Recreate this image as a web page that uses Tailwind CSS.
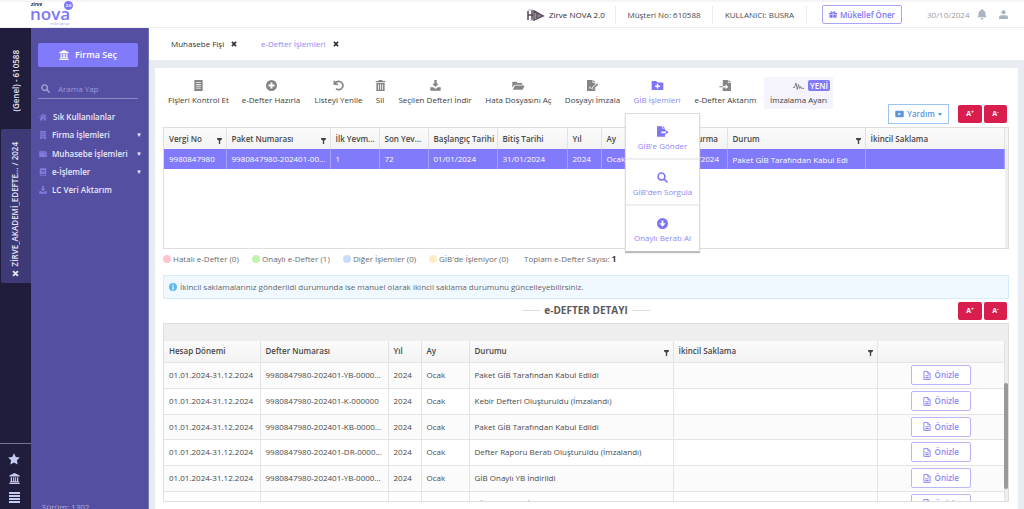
<!DOCTYPE html>
<html lang="tr">
<head>
<meta charset="utf-8">
<title>Zirve NOVA - e-Defter İşlemleri</title>
<script src="https://cdn.jsdelivr.net/npm/@tailwindcss/browser@4"></script>
</head>
<body class="h-screen flex flex-col overflow-hidden bg-white font-['Open_Sans',sans-serif] text-[8px] leading-3 text-[#4a4a4a]">
<svg class="hidden">
  <symbol id="bank" viewBox="0 0 16 16"><path d="M8 0 15.500 3.500V5H.5V3.500zM2.500 6h2v6h1.500V6h1.500v6h1V6H10v6h1.500V6h2v6h1v1.500h-13V12h1zM.5 14.200h15V16H.5z"/></symbol>
  <symbol id="search" viewBox="0 0 16 16"><path fill="none" stroke="currentColor" stroke-width="2.400" stroke-linecap="round" d="M6.500 1.500a5 5 0 1 1 0 10a5 5 0 0 1 0-10M10.300 10.300 14.600 14.600"/></symbol>
  <symbol id="home" viewBox="0 0 16 16"><path d="M8 1.500 0 8.500l1 1.200L8 3.800l7 5.900 1-1.200-2.500-2.200V2.500h-2v2zM8 5.200 2.500 9.800V15h4v-4h3v4h4V9.800z"/></symbol>
  <symbol id="building" viewBox="0 0 16 16"><path fill-rule="evenodd" d="M2.500 0h11v15H15v1H9.500v-3h-3v3H1v-1h1.500zM5 2.500v2h2v-2zm4 0v2h2v-2zM5 6v2h2V6zm4 0v2h2V6zM5 9.500v2h2v-2zm4 0v2h2v-2z"/></symbol>
  <symbol id="wallet" viewBox="0 0 16 16"><path fill-rule="evenodd" d="M2 2h12v1.500H3v.8h12.500V14H.5V3.500Q.5 2 2 2m9.500 6.200v1.800h2V8.200z"/></symbol>
  <symbol id="book" viewBox="0 0 16 16"><path fill-rule="evenodd" d="M3.500.5h11V12H14v2h.5v1.500h-11Q1.500 15.500 1.500 13.500v-11Q1.500.5 3.500.5M5 4v1.300h6.500V4zm0 3v1.300h6.500V7zM3.500 12v2h9v-2z"/></symbol>
  <symbol id="download" viewBox="0 0 16 16"><path d="M6.300 0h3.400v5.500h3L8 10.300 3.300 5.500h3zM.5 10.500h4L8 13l3.500-2.500h4v5H.5z"/></symbol>
  <symbol id="star" viewBox="0 0 16 16"><path d="m8 .3 2.400 4.900 5.400.8-3.900 3.800.9 5.400L8 12.700l-4.800 2.500.9-5.400L.2 6l5.400-.8z"/></symbol>
  <symbol id="bars" viewBox="0 0 11 11"><path d="M0 0h11v2H0zm0 3h11v2H0zm0 3h11v2H0zm0 3h11v2H0z"/></symbol>
  <symbol id="times" viewBox="0 0 16 16"><path fill="none" stroke="currentColor" stroke-width="4.500" d="m2.500 2.500 11 11m0-11-11 11"/></symbol>
  <symbol id="receipt" viewBox="0 0 16 16"><path fill-rule="evenodd" d="M2 0h12v16H2zM4.500 3v1.100h7V3zm0 2.700v1.100h7V5.700zm0 2.700v1.100h7V8.400zm0 2.700v1.100h7v-1.100z"/></symbol>
  <symbol id="plus" viewBox="0 0 16 16"><path fill-rule="evenodd" d="M8 0a8 8 0 1 1 0 16A8 8 0 0 1 8 0M6.700 3.700v3h-3v2.600h3v3h2.600v-3h3V6.700h-3v-3z"/></symbol>
  <symbol id="undo" viewBox="0 0 16 16"><path fill="none" stroke="currentColor" stroke-width="2.400" d="M2 1v5.200h5.500M2.400 6C4 2.800 7 1.600 9.700 2.200a6 6 0 1 1-5.300 10.300"/></symbol>
  <symbol id="trash" viewBox="0 0 16 16"><path fill-rule="evenodd" d="M5.500 0h5l.7 1.300H15v2H1v-2h3.800zM2 4.200h12V16H2zM4.500 6v8h1.200V6zm2.900 0v8h1.200V6zm2.900 0v8h1.200V6z"/></symbol>
  <symbol id="folder" viewBox="0 0 18 16"><path d="M0 11V2.500h6l2 2h6.500V7H4.500Q3 7 2.300 8.200zM4.500 8H18l-3 6H.7l2.500-5Q3.700 8 4.500 8"/></symbol>
  <symbol id="sign" viewBox="0 0 18 16"><path fill-rule="evenodd" d="M1 0h8v4h4v2L8 11v2.500h2.500l2.500-2.400V16H1zM10 0l3 3h-3zM3.500 12.500h1.200l.8-1.500 1 1.800h1V11.600h-.7L5.500 9z"/><path d="m9.200 11.400 6.300-6.300 1.700 1.700-6.300 6.200-2 .4z"/></symbol>
  <symbol id="folderplus" viewBox="0 0 18 16"><path fill-rule="evenodd" d="M1.500 1.500H7l2 2h7.500q1 0 1 1V13.500q0 1.200-1 1.200h-15Q.5 14.700.5 13.500V2.500q0-1 1-1M8 5.500V8H5.500v2H8v2.500h2V10h2.500V8H10V5.500z"/></symbol>
  <symbol id="import" viewBox="0 0 18 16"><path fill-rule="evenodd" d="M5 0h7.500v4H17v12H5v-5h4v2.600L13 10 9 6.200v2.600H5zM13.500 0 17 3h-3.500zM0 9h5v1.600H0z"/></symbol>
  <symbol id="export" viewBox="0 0 18 16"><path fill-rule="evenodd" d="M0 0h8v4h4v4H6.500v2.500H12V16H0zM9 0l3 3H9zM12 5.500l5.500 3.800-5.500 3.700v-2.500h1.500V8H12z"/></symbol>
  <symbol id="arrowdown" viewBox="0 0 16 16"><path fill-rule="evenodd" d="M8 0a8 8 0 1 1 0 16A8 8 0 0 1 8 0M6.700 3.500v4.300H3.500L8 12.700l4.500-4.900H9.300V3.500z"/></symbol>
  <symbol id="pulse" viewBox="0 0 22 16"><path fill="none" stroke="currentColor" stroke-width="1.800" stroke-linejoin="round" d="M0 11h3L6 2l2.500 13L11 5l2 8 2-4 1.500 4 1.500-1 4 1"/></symbol>
  <symbol id="video" viewBox="0 0 18 16"><path fill-rule="evenodd" d="M2.500 1.500h13q2 0 2 2v9q0 2-2 2h-13q-2 0-2-2v-9q0-2 2-2M7 5v6l5-3z"/></symbol>
  <symbol id="filter" viewBox="0 0 12 14"><path d="M0 0h12v2.800L7.600 6.500V14H4.400V6.500L0 2.800z"/></symbol>
  <symbol id="info" viewBox="0 0 16 16"><path fill-rule="evenodd" d="M8 0a8 8 0 1 1 0 16A8 8 0 0 1 8 0M6.800 3v2.200h2.400V3zM6 6.500V8h.8v3.300H6v1.500h4v-1.500h-.8V6.500z"/></symbol>
  <symbol id="file" viewBox="0 0 14 16"><path fill="none" stroke="currentColor" stroke-width="1.700" d="M1.500 1h7L12.500 5v10h-11zM8.500 1v4h4"/><path d="M4 7.500h6v1.300H4zm0 2.700h6v2.800H4z"/></symbol>
  <symbol id="gift" viewBox="0 0 18 16"><path d="M0 4h8.200v4H0zm9.800 0H18v4H9.800zM1 9h7.200v6.500H1zm8.800 0H17v6.500H9.800z"/><path fill="none" stroke="currentColor" stroke-width="1.700" d="M9 4Q3 4 4 1.700 6-.5 9 4q3-4.500 5-2.300Q15 4 9 4"/></symbol>
  <symbol id="bell" viewBox="0 0 16 18"><path d="M7 0h2v1.600q4.500.9 4.500 5.900 0 3.500 2 6H.5q2-2.500 2-6 0-5 4.500-5.900zM5.700 14.700h4.600Q10 17.500 8 17.500t-2.300-2.800"/></symbol>
  <symbol id="user" viewBox="0 0 16 16"><circle cx="8" cy="4" r="3.700"/><path d="M0 16v-3q0-3.500 4-3.500h8q4 0 4 3.500v3z"/></symbol>
</svg>

<header class="h-7 shrink-0 flex items-center border-t-2 border-b border-t-[#f4f5f7] border-b-[#eeeef1] pr-4">
  <a href="#" aria-label="Zirve Nova" class="relative ml-[30px] h-full w-[46px] text-[#7d76f5]">
    <span class="absolute left-px top-0 text-[5px] leading-[5px] font-bold italic text-[#2d2d36]">zirve</span>
    <span class="absolute left-0 top-[5px] text-[17px] leading-[14px] font-semibold">nova</span>
    <span class="absolute left-[34px] top-[-1px] size-[9px] rounded-full bg-[#7d76f5] text-center text-[4px] leading-[9px] font-bold text-white">2.0</span>
    <span class="absolute left-[20px] top-[19px] text-[4px] leading-[5px] text-[#a7a2f6]">mikrogrup</span>
  </a>
  <div class="ml-auto flex h-[18px] items-center">
    <div class="flex h-full w-[89px] items-center gap-1 border-r border-[#ececf0] text-[#2e2e2e]">
      <svg class="h-3 w-[18px]" viewBox="0 0 18 12"><path fill="none" stroke="#54484f" stroke-width="1.500" d="M1 11V2M1 6h5M5 1v10M7 2l9 5-9 4zM10 4v6"/><path fill="#675a70" d="m8 3 9 4-9 4z" opacity=".7"/><path stroke="#b9a8d8" d="M1 1h5M3 11h3"/></svg>
      Zirve NOVA 2.0
    </div>
    <div class="flex h-full w-[97px] items-center justify-center border-r border-[#ececf0]">Müşteri No: 610588</div>
    <div class="flex h-full w-[94px] items-center justify-center border-r border-[#ececf0]">KULLANICI: BUSRA</div>
    <button class="ml-[15px] flex h-[19px] w-20 items-center justify-center gap-[3px] rounded-xs border border-[#aaa5fb] font-semibold text-[#7d76f5]"><svg class="h-[7px] w-2 fill-current"><use href="#gift"/></svg>Mükellef Öner</button>
    <time class="ml-[25px] w-[42px] text-[#9a9aa2]">30/10/2024</time>
    <button aria-label="Bildirimler" class="ml-2 text-[#a9b3c4]"><svg class="h-[11px] w-[10px] fill-current"><use href="#bell"/></svg></button>
    <button aria-label="Hesap" class="ml-3 text-[#a9b3c4]"><svg class="size-[9px] fill-current"><use href="#user"/></svg></button>
  </div>
</header>

<div class="flex min-h-0 flex-1">
  <aside class="flex w-[31px] shrink-0 flex-col bg-[#1f1d3b] text-[#e4e4f4]">
    <button class="flex h-[101px] items-center justify-center pt-1 font-semibold"><span class="rotate-180 [writing-mode:vertical-rl] whitespace-nowrap">(Genel) - 610588</span></button>
    <div class="ml-px flex h-[154px] flex-col items-center justify-end gap-1 rounded-l-xs bg-[#3e3a78] pr-0.5 pb-1.5 font-semibold">
      <button class="rotate-180 [writing-mode:vertical-rl] whitespace-nowrap">ZİRVE_AKADEMİ_EDEFTE... / 2024</button>
      <button aria-label="Kapat"><svg class="size-[7px]"><use href="#times"/></svg></button>
    </div>
    <div class="mt-auto flex h-[66px] flex-col items-center gap-2 border-t border-[#77758f] pt-[9px] pr-[3px] text-[#c5cbf3]">
      <button aria-label="Favoriler"><svg class="size-3 fill-current"><use href="#star"/></svg></button>
      <button aria-label="Firmalar"><svg class="size-[11px] fill-current"><use href="#bank"/></svg></button>
      <button aria-label="Menü"><svg class="size-[11px] fill-current"><use href="#bars"/></svg></button>
    </div>
  </aside>

  <nav class="flex w-[118px] shrink-0 flex-col overflow-hidden border-r border-[#7672b8] bg-[#544fa1] pl-[7px] pr-[10px] pt-[15px] text-[#e9e8fa]">
    <button class="flex h-6 shrink-0 items-center justify-center gap-1.5 rounded-xs bg-[#817afa] text-[9px] font-semibold text-white"><svg class="size-[10px] fill-current"><use href="#bank"/></svg>Firma Seç</button>
    <label class="mt-3 flex h-5 shrink-0 items-center gap-2 border-b border-[#8e8ac6] pl-[3px] text-[#a9a6dc]"><svg class="size-[9px] shrink-0"><use href="#search"/></svg><input aria-label="Arama Yap" placeholder="Arama Yap" class="w-full min-w-0 bg-transparent outline-none placeholder:text-[#9d99de]"></label>
    <ul class="mt-[9px] font-semibold">
      <li><a href="#" class="flex h-[18px] items-center gap-1.5 pl-px"><svg class="size-2 fill-[#827cdd]"><use href="#home"/></svg>Sık Kullanılanlar</a></li>
      <li><a href="#" class="flex h-[18px] items-center gap-[5px] pl-px"><svg class="size-2 fill-[#827cdd]"><use href="#building"/></svg>Firma İşlemleri<span class="ml-auto mr-[-4px] text-[6px]">▼</span></a></li>
      <li><a href="#" class="flex h-[19px] items-center gap-[5px] whitespace-nowrap pl-px"><svg class="size-2 fill-[#827cdd]"><use href="#wallet"/></svg>Muhasebe İşlemleri<span class="ml-auto mr-[-4px] text-[6px]">▼</span></a></li>
      <li><a href="#" class="flex h-[18px] items-center gap-[5px] pl-px"><svg class="size-2 fill-[#827cdd]"><use href="#book"/></svg>e-İşlemler<span class="ml-auto mr-[-4px] text-[6px]">▼</span></a></li>
      <li><a href="#" class="flex h-[18px] items-center gap-[5px] pl-px"><svg class="size-2 fill-[#827cdd]"><use href="#download"/></svg>LC Veri Aktarım</a></li>
    </ul>
    <div class="mt-auto -mb-1 pl-1 text-[#b3b0dd]">Sürüm: 1302</div>
  </nav>

  <main class="flex min-w-0 flex-1 flex-col bg-[#e8ebf2]">
    <div class="flex h-8 shrink-0 items-center bg-white pl-[22px] font-medium text-[#333]">
      <div class="flex w-[90px] items-center gap-[7px]"><a href="#">Muhasebe Fişi</a><button aria-label="Kapat"><svg class="size-[6px]"><use href="#times"/></svg></button></div>
      <div class="flex items-center gap-[7px]"><a href="#" class="text-[#8d87f7]">e-Defter İşlemleri</a><button aria-label="Kapat"><svg class="size-[6px]"><use href="#times"/></svg></button></div>
    </div>
    <section class="mt-2 ml-1.5 mr-[6px] flex min-h-0 flex-1 flex-col bg-white pb-[7px] pl-2 pr-[9px]">
      <div class="flex h-[59px] shrink-0 items-start pt-[9px]">
        <div class="flex text-[#3c3c3c]">
          <button class="flex h-8 w-[71px] flex-col items-center justify-center gap-[3px] whitespace-nowrap"><svg class="size-[11px] fill-[#858585]"><use href="#receipt"/></svg>Fişleri Kontrol Et</button>
          <button class="flex h-8 w-[74px] flex-col items-center justify-center gap-[3px] whitespace-nowrap"><svg class="size-[11px] fill-[#858585]"><use href="#plus"/></svg>e-Defter Hazırla</button>
          <button class="flex h-8 w-[61px] flex-col items-center justify-center gap-[3px] whitespace-nowrap"><svg class="size-[11px] text-[#858585]"><use href="#undo"/></svg>Listeyi Yenile</button>
          <button class="flex h-8 w-[22px] flex-col items-center justify-center gap-[3px] whitespace-nowrap"><svg class="size-[11px] fill-[#858585]"><use href="#trash"/></svg>Sil</button>
          <button class="flex h-8 w-[88px] flex-col items-center justify-center gap-[3px] whitespace-nowrap"><svg class="size-[11px] fill-[#858585]"><use href="#download"/></svg>Seçilen Defteri İndir</button>
          <button class="flex h-8 w-[79px] flex-col items-center justify-center gap-[3px] whitespace-nowrap"><svg class="h-[11px] w-[13px] fill-[#858585]"><use href="#folder"/></svg>Hata Dosyasını Aç</button>
          <button class="flex h-8 w-[69px] flex-col items-center justify-center gap-[3px] whitespace-nowrap"><svg class="h-[11px] w-[13px] fill-[#858585]"><use href="#sign"/></svg>Dosyayı İmzala</button>
          <div class="relative w-[60px]">
            <button aria-expanded="true" class="flex h-8 w-full flex-col items-center justify-center gap-[3px] whitespace-nowrap text-[#8d87f7]"><svg class="h-[11px] w-[13px] fill-[#7d76f5]"><use href="#folderplus"/></svg>GİB İşlemleri</button>
            <div class="absolute left-[-2px] top-9 z-10 w-[75px] divide-y-2 divide-[#eeeeee] border border-[#dcdcdc] border-b-[#bcbcbc] bg-white text-[#8d87f7] shadow-[0_1px_1px_#bbb]">
              <button class="flex h-[46px] w-full flex-col items-center justify-end gap-[3px] pb-1.5"><svg class="h-[11px] w-[12px] fill-[#7d76f5]"><use href="#export"/></svg>GİB'e Gönder</button>
              <button class="flex h-[46px] w-full flex-col items-center justify-end gap-[3px] pb-1.5"><svg class="size-[11px] text-[#7d76f5]"><use href="#search"/></svg>GİB'den Sorgula</button>
              <button class="flex h-[45px] w-full flex-col items-center justify-end gap-[3px] pb-[7px]"><svg class="size-[11px] fill-[#7d76f5]"><use href="#arrowdown"/></svg>Onaylı Beratı Al</button>
            </div>
          </div>
          <button class="flex h-8 w-[77px] flex-col items-center justify-center gap-[3px] whitespace-nowrap"><svg class="h-[11px] w-[13px] fill-[#858585]"><use href="#import"/></svg>e-Defter Aktarım</button>
          <button class="flex h-8 w-[69px] flex-col items-center justify-center gap-[3px] whitespace-nowrap rounded-xs bg-[#f5f3fb]"><span class="flex items-center gap-1 pl-[26px]"><svg class="h-2 w-[11px] text-[#777]"><use href="#pulse"/></svg><span class="h-[11px] rounded-xs bg-[#817afa] px-0.5 leading-[11px] font-semibold text-white">YENİ</span></span>İmzalama Ayarı</button>
        </div>
        <div class="ml-auto mr-0.5 flex gap-0.5 pt-[27px] font-bold">
          <button class="mr-[7px] flex h-5 w-[61px] items-center justify-center gap-[3px] border border-[#9cc3f2] font-semibold text-[#5b96df]"><svg class="h-2 w-[9px] fill-current"><use href="#video"/></svg>Yardım<svg class="h-[3px] w-[4px] fill-current" viewBox="0 0 4 3"><path d="M0 0h4L2 3z"/></svg></button>
          <button class="mt-px h-[18px] w-6 rounded-xs bg-[#d91e4e] text-[7px] leading-[18px] text-white">A<sup class="text-[5px]">+</sup></button>
          <button class="mt-px h-[18px] w-[23px] rounded-xs bg-[#d91e4e] text-[7px] leading-[18px] text-white">A<sup class="text-[5px]">-</sup></button>
        </div>
      </div>

      <div class="h-[122px] shrink-0 overflow-hidden border border-[#dedede] bg-[linear-gradient(#f6f6f6_21px,#eeeeee_21px)]">
        <div class="mr-[3px] h-full bg-white">
        <table class="w-full table-fixed border-collapse text-left whitespace-nowrap">
          <colgroup><col class="w-[62px]"><col class="w-[104px]"><col class="w-[49px]"><col class="w-[49px]"><col class="w-[69px]"><col class="w-[70px]"><col class="w-[34px]"><col class="w-[70px]"><col class="w-[56px]"><col class="w-[138px]"><col></colgroup>
          <thead class="bg-[linear-gradient(#fbfbfb,#f3f3f3)] text-[#484848]">
            <tr class="h-[21px] *:border-r *:border-[#e2e2e2] *:pl-[5px] *:font-semibold">
              <th><div class="flex items-center justify-between pr-1">Vergi No<svg class="mt-1 h-[6px] w-[5px] fill-[#444]"><use href="#filter"/></svg></div></th>
              <th><div class="flex items-center justify-between pr-1">Paket Numarası<svg class="mt-1 h-[6px] w-[5px] fill-[#444]"><use href="#filter"/></svg></div></th>
              <th>İlk Yevm...</th><th>Son Yev...</th><th>Başlangıç Tarihi</th><th>Bitiş Tarihi</th><th>Yıl</th><th>Ay</th><th>Oluşturma</th>
              <th><div class="flex items-center justify-between pr-1">Durum<svg class="mt-1 h-[6px] w-[5px] fill-[#444]"><use href="#filter"/></svg></div></th>
              <th>İkincil Saklama</th>
            </tr>
          </thead>
          <tbody>
            <tr class="h-5 bg-[#817afa] text-white *:border-r *:border-[#a5a0fb] *:pl-[5px]">
              <td>9980847980</td><td>9980847980-202401-00...</td><td>1</td><td>72</td><td>01/01/2024</td><td>31/01/2024</td><td>2024</td><td>Ocak</td><td>05/02/2024</td><td class="pt-0.5">Paket GİB Tarafından Kabul Edi</td><td></td>
            </tr>
          </tbody>
        </table>
        </div>
      </div>

      <div class="flex h-[26px] shrink-0 items-center pb-1.5 text-[#6a6a6a]">
        <span class="flex w-[89px] items-center gap-0.5"><i class="size-2 rounded-full bg-[#ffc4cf]"></i>Hatalı e-Defter (0)</span>
        <span class="flex w-[91px] items-center gap-0.5"><i class="size-2 rounded-full bg-[#c4f3b0]"></i>Onaylı e-Defter (1)</span>
        <span class="flex w-[86px] items-center gap-0.5"><i class="size-2 rounded-full bg-[#cadcf9]"></i>Diğer İşlemler (0)</span>
        <span class="flex w-[95px] items-center gap-0.5"><i class="size-2 rounded-full bg-[#ffecc6]"></i>GİB'de İşleniyor (0)</span>
        <span>Toplam e-Defter Sayısı: <b class="text-[#333]">1</b></span>
      </div>

      <div role="note" class="flex h-6 shrink-0 items-center gap-[3px] border border-[#d3edfb] bg-[#f0f9ff] pl-[5px] text-[#666]"><svg class="size-2 fill-[#5cbcf2]"><use href="#info"/></svg>İkincil saklamalarınız gönderildi durumunda ise manuel olarak ikincil saklama durumunu güncelleyebilirsiniz.</div>

      <div class="relative flex h-6 shrink-0 items-center justify-center gap-1 pb-0.5">
        <i class="h-px w-[18px] bg-[#dedede]"></i><h2 class="text-[10px] font-bold text-[#5a5a5a]">e-DEFTER DETAYI</h2><i class="h-px w-[18px] bg-[#dedede]"></i>
        <div class="absolute right-0.5 top-[3px] flex gap-0.5 font-bold">
          <button class="h-[18px] w-6 rounded-xs bg-[#d91e4e] text-[7px] leading-[18px] text-white">A<sup class="text-[5px]">+</sup></button>
          <button class="h-[18px] w-[23px] rounded-xs bg-[#d91e4e] text-[7px] leading-[18px] text-white">A<sup class="text-[5px]">-</sup></button>
        </div>
      </div>

      <div class="relative min-h-0 flex-1 overflow-hidden border border-[#dedede] bg-[#eeeeee] pt-[17px]">
        <div class="mr-[3px] bg-white">
        <table class="w-full table-fixed border-collapse text-left whitespace-nowrap">
          <colgroup><col class="w-[96px]"><col class="w-[128px]"><col class="w-[33px]"><col class="w-[48px]"><col class="w-[204px]"><col class="w-[204px]"><col></colgroup>
          <thead class="bg-[linear-gradient(#fbfbfb,#f3f3f3)] text-[#484848]">
            <tr class="h-[21px] *:border-r *:border-[#e2e2e2] *:pl-[5px] *:font-semibold">
              <th>Hesap Dönemi</th><th>Defter Numarası</th><th>Yıl</th><th>Ay</th>
              <th><div class="flex items-center justify-between pr-1">Durumu<svg class="mt-1 h-[6px] w-[5px] fill-[#444]"><use href="#filter"/></svg></div></th>
              <th><div class="flex items-center justify-between pr-1">İkincil Saklama<svg class="mt-1 h-[6px] w-[5px] fill-[#444]"><use href="#filter"/></svg></div></th>
              <th></th>
            </tr>
          </thead>
          <tbody class="[&>tr]:h-[26px] [&>tr:nth-child(3n)]:h-[25px] [&>tr]:border-t [&>tr]:border-[#e4e4e4] [&>tr:nth-child(odd)]:bg-[#fbfbfb] [&_td]:border-r [&_td]:border-[#e4e4e4] [&_td]:pl-[5px] [&_td:last-child]:pl-0">
            <tr><td>01.01.2024-31.12.2024</td><td>9980847980-202401-YB-0000...</td><td>2024</td><td>Ocak</td><td>Paket GİB Tarafından Kabul Edildi</td><td></td><td><button class="mx-auto flex h-5 w-[60px] items-center justify-center gap-1 rounded-xs border border-[#bab6fa] bg-white font-semibold text-[#8d87f7]"><svg class="h-[9px] w-2 fill-current"><use href="#file"/></svg>Önizle</button></td></tr>
            <tr><td>01.01.2024-31.12.2024</td><td>9980847980-202401-K-000000</td><td>2024</td><td>Ocak</td><td>Kebir Defteri Oluşturuldu (İmzalandı)</td><td></td><td><button class="mx-auto flex h-5 w-[60px] items-center justify-center gap-1 rounded-xs border border-[#bab6fa] bg-white font-semibold text-[#8d87f7]"><svg class="h-[9px] w-2 fill-current"><use href="#file"/></svg>Önizle</button></td></tr>
            <tr><td>01.01.2024-31.12.2024</td><td>9980847980-202401-KB-0000...</td><td>2024</td><td>Ocak</td><td>Paket GİB Tarafından Kabul Edildi</td><td></td><td><button class="mx-auto flex h-5 w-[60px] items-center justify-center gap-1 rounded-xs border border-[#bab6fa] bg-white font-semibold text-[#8d87f7]"><svg class="h-[9px] w-2 fill-current"><use href="#file"/></svg>Önizle</button></td></tr>
            <tr><td>01.01.2024-31.12.2024</td><td>9980847980-202401-DR-0000...</td><td>2024</td><td>Ocak</td><td>Defter Raporu Beratı Oluşturuldu (İmzalandı)</td><td></td><td><button class="mx-auto flex h-5 w-[60px] items-center justify-center gap-1 rounded-xs border border-[#bab6fa] bg-white font-semibold text-[#8d87f7]"><svg class="h-[9px] w-2 fill-current"><use href="#file"/></svg>Önizle</button></td></tr>
            <tr><td>01.01.2024-31.12.2024</td><td>9980847980-202401-YB-0000...</td><td>2024</td><td>Ocak</td><td>GİB Onaylı YB İndirildi</td><td></td><td><button class="mx-auto flex h-5 w-[60px] items-center justify-center gap-1 rounded-xs border border-[#bab6fa] bg-white font-semibold text-[#8d87f7]"><svg class="h-[9px] w-2 fill-current"><use href="#file"/></svg>Önizle</button></td></tr>
            <tr><td>01.01.2024-31.12.2024</td><td>9980847980-202401-KB-0000...</td><td>2024</td><td>Ocak</td><td>GİB Onaylı KB İndirildi</td><td></td><td><button class="mx-auto flex h-5 w-[60px] items-center justify-center gap-1 rounded-xs border border-[#bab6fa] bg-white font-semibold text-[#8d87f7]"><svg class="h-[9px] w-2 fill-current"><use href="#file"/></svg>Önizle</button></td></tr>
          </tbody>
        </table>
        </div>
        <div class="absolute right-0 top-[59px] h-[106px] w-1 rounded-full bg-[#999]"></div>
      </div>
    </section>
  </main>
</div>
</body>
</html>
